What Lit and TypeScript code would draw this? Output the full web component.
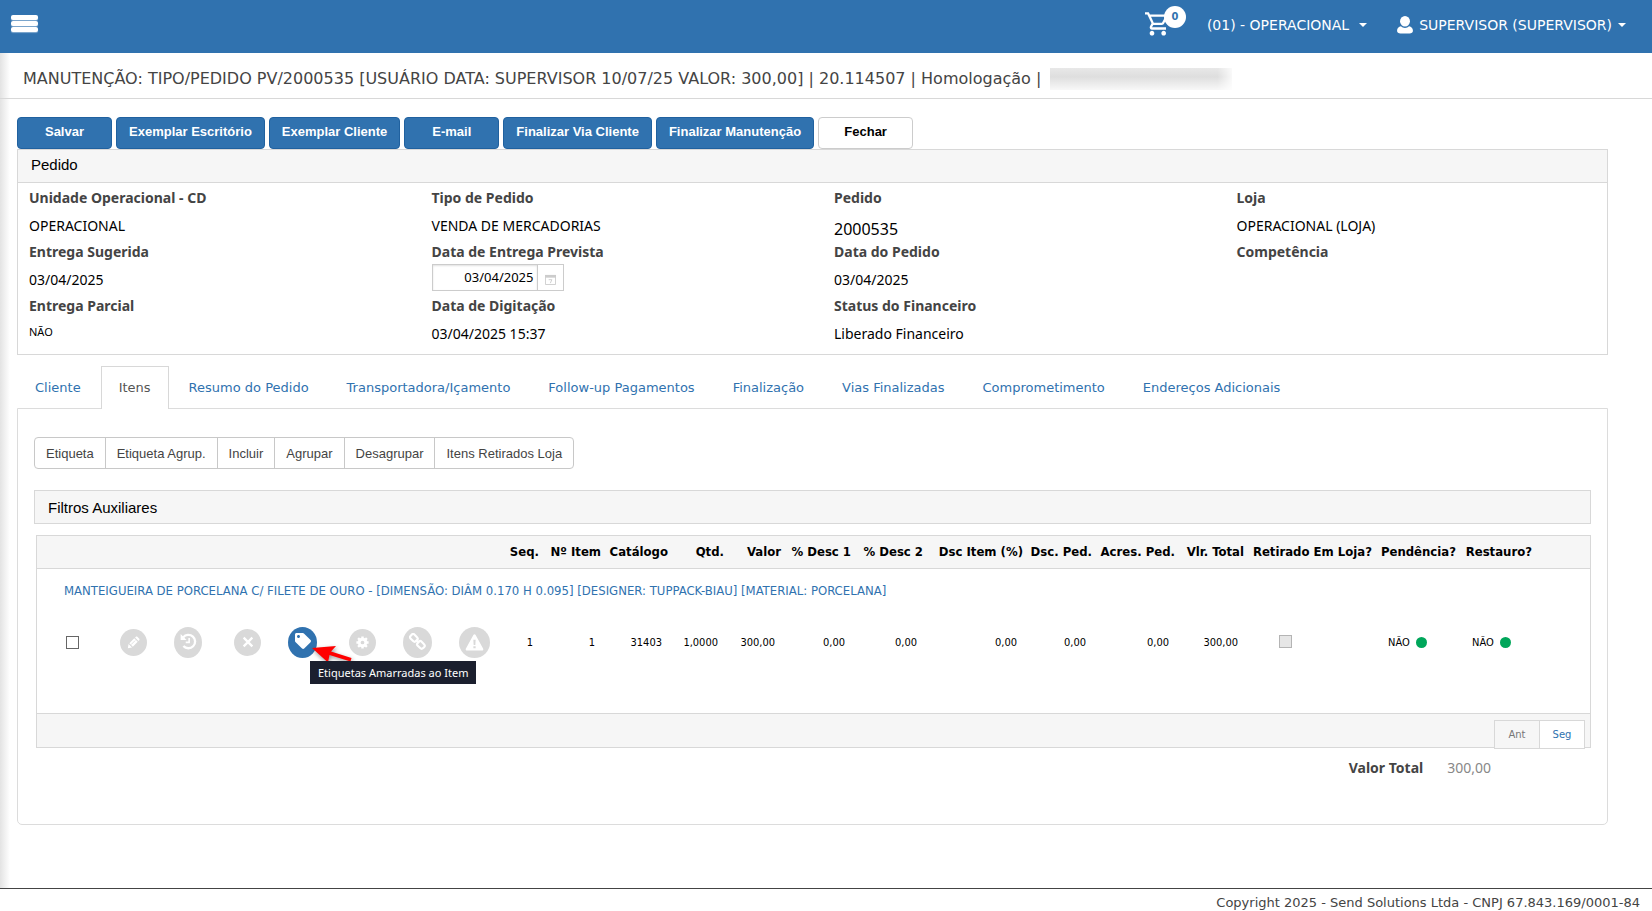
import { LitElement, html, css, svg, nothing } from "lit";
import type { TemplateResult } from "lit";
import { customElement, property, state } from "lit/decorators.js";
import { classMap } from "lit/directives/class-map.js";

interface Field {
  label: string;
  value?: string;
  kind?: "date" | "big" | "small";
}

interface Column {
  label: string;
  width: number;
  value: string;
  kind?: "check" | "status";
}

interface Action {
  label: string;
  icon: string;
  size: "small" | "medium" | "large" | "wide";
  spaced?: boolean;
  active?: boolean;
}

const FIELDS: Field[] = [
  { label: "Unidade Operacional - CD", value: "OPERACIONAL" },
  { label: "Tipo de Pedido", value: "VENDA DE MERCADORIAS" },
  { label: "Pedido", value: "2000535", kind: "big" },
  { label: "Loja", value: "OPERACIONAL (LOJA)" },
  { label: "Entrega Sugerida", value: "03/04/2025" },
  { label: "Data de Entrega Prevista", value: "03/04/2025", kind: "date" },
  { label: "Data do Pedido", value: "03/04/2025" },
  { label: "Competência" },
  { label: "Entrega Parcial", value: "NÃO", kind: "small" },
  { label: "Data de Digitação", value: "03/04/2025 15:37" },
  { label: "Status do Financeiro", value: "Liberado Financeiro" },
];

const TABS = [
  "Cliente",
  "Itens",
  "Resumo do Pedido",
  "Transportadora/Içamento",
  "Follow-up Pagamentos",
  "Finalização",
  "Vias Finalizadas",
  "Comprometimento",
  "Endereços Adicionais",
];

const COLUMNS: Column[] = [
  { label: "Seq.", width: 38, value: "1" },
  { label: "Nº Item", width: 62, value: "1" },
  { label: "Catálogo", width: 67, value: "31403" },
  { label: "Qtd.", width: 56, value: "1,0000" },
  { label: "Valor", width: 57, value: "300,00" },
  { label: "% Desc 1", width: 70, value: "0,00" },
  { label: "% Desc 2", width: 72, value: "0,00" },
  { label: "Dsc Item (%)", width: 100, value: "0,00" },
  { label: "Dsc. Ped.", width: 69, value: "0,00" },
  { label: "Acres. Ped.", width: 83, value: "0,00" },
  { label: "Vlr. Total", width: 69, value: "300,00" },
  { label: "Retirado Em Loja?", width: 128, value: "", kind: "check" },
  { label: "Pendência?", width: 84, value: "NÃO", kind: "status" },
  { label: "Restauro?", width: 76, value: "NÃO", kind: "status" },
];

const ACTIONS: Action[] = [
  { label: "Editar", icon: "pencil", size: "small" },
  { label: "Histórico", icon: "history", size: "medium", spaced: true },
  { label: "Excluir", icon: "close", size: "small" },
  { label: "Etiquetas Amarradas ao Item", icon: "tag", size: "large", spaced: true, active: true },
  { label: "Configurar", icon: "gear", size: "small" },
  { label: "Vincular", icon: "link", size: "large" },
  { label: "Alerta", icon: "warning", size: "wide" },
];

const GLYPHS: Record<string, TemplateResult> = {
  pencil: svg`<svg viewBox="0 0 16 16" width="13" height="13">
    <path fill="#fff" d="M1 15l.9-5.200 4.300 4.300zM2.900 8.800l6-6 4.300 4.300-6 6zM9.900 1.900l1-1c.5-.5 1.300-.5 1.800 0l2.400 2.400c.5.5.5 1.300 0 1.800l-1 1z"/>
    <path stroke="#d9d9d9" stroke-width="1" d="M5 10.600l5-5" fill="none"/></svg>`,
  history: svg`<svg viewBox="0 0 16 16" width="17" height="17">
    <path fill="none" stroke="#fff" stroke-width="2.2" d="M3 4.1A6.3 6.3 0 1 1 3.2 12.2"/>
    <path fill="#fff" d="M.6 1v5.6h5.6z"/>
    <path fill="none" stroke="#fff" stroke-width="1.5" d="M8.6 4.6v4.2H5.4"/></svg>`,
  close: svg`<svg viewBox="0 0 16 16" width="12" height="12">
    <path fill="none" stroke="#fff" stroke-width="3" d="M2.2 2.2l11.6 11.6M13.8 2.2L2.2 13.8"/></svg>`,
  tag: svg`<svg viewBox="0 0 512 512" width="16" height="16">
    <path fill="#fff" d="M0 252.118V48C0 21.49 21.49 0 48 0h204.118a48 48 0 0 1 33.941 14.059l211.882 211.882c18.745 18.745 18.745 49.137 0 67.882L293.823 497.941c-18.745 18.745-49.137 18.745-67.882 0L14.059 286.059A48 48 0 0 1 0 252.118zM112 64c-26.51 0-48 21.49-48 48s21.49 48 48 48 48-21.49 48-48-21.49-48-48-48z"/></svg>`,
  gear: svg`<svg viewBox="-8 -8 16 16" width="13" height="13">
    <circle r="4.1" fill="none" stroke="#fff" stroke-width="3.6"/>
    <path stroke="#fff" stroke-width="3" d="M0-4.5v-3M0 4.5v3M-4.5 0h-3M4.5 0h3M3.4 3.4l2 2M-3.4 3.4l-2 2M3.4-3.4l2-2M-3.4-3.4l-2-2"/></svg>`,
  link: svg`<svg viewBox="0 0 16 16" width="17" height="17">
    <g fill="none" stroke="#fff" stroke-width="2">
      <rect x="-3.6" y="-2.6" width="7.2" height="5.2" rx="2" transform="translate(4.6 4.6) rotate(45)"/>
      <rect x="-3.6" y="-2.6" width="7.2" height="5.2" rx="2" transform="translate(11.2 11.2) rotate(45)"/>
      <path d="M6.3 6.3l3.2 3.2"/></g></svg>`,
  warning: svg`<svg viewBox="0 0 20 18" width="19" height="17">
    <path fill="#fff" d="M8.8 1c.5-.9 1.9-.9 2.4 0l8 14.6c.5.9-.2 2-1.2 2H2c-1 0-1.7-1.1-1.2-2z"/>
    <path fill="#d9d9d9" d="M8.8 6h2.4l-.3 5.6H9.1zM8.8 12.9h2.4v2.2H8.8z"/></svg>`,
};

const caret = html`<svg class="caret" viewBox="0 0 8 4" width="8" height="4" aria-hidden="true">
  <path fill="#fff" d="M0 0h8L4 4z" /></svg>`;

@customElement("app-topbar")
export class AppTopbar extends LitElement {
  static styles = css`
    :host {
      display: block;
      background: #3072af;
      color: #fff;
    }
    .bar {
      display: flex;
      align-items: center;
      height: 49px;
      padding: 0 26px 4px 11px;
    }
    button {
      display: flex;
      align-items: center;
      border: 0;
      padding: 0;
      background: none;
      color: inherit;
      font: 14px/20px "DejaVu Sans", Verdana, sans-serif;
      white-space: nowrap;
      cursor: pointer;
    }
    .menu {
      flex-direction: column;
      gap: 1px;
      width: 27px;
      margin: 0 auto 3px 0;
    }
    .menu span {
      width: 100%;
      height: 5px;
      border-radius: 2px;
      background: #fff;
      box-shadow: 0 1px 1px rgba(255, 255, 255, 0.4);
    }
    .cart {
      position: relative;
      width: 41px;
      height: 28px;
      margin-right: 21px;
    }
    .badge {
      position: absolute;
      top: -5px;
      right: 0;
      width: 22px;
      border-radius: 50%;
      background: #fff;
      color: #3072af;
      font: bold 11px/22px "DejaVu Sans Condensed", Tahoma, sans-serif;
      text-align: center;
    }
    .unit {
      gap: 10px;
      margin-right: 30px;
    }
    .user {
      gap: 6px;
    }
  `;

  render() {
    return html`<header class="bar">
      <button class="menu" aria-label="Menu"><span></span><span></span><span></span></button>
      <button class="cart" aria-label="Carrinho">
        <svg viewBox="1 1 24 24" width="28" height="28" aria-hidden="true">
          <path
            fill="#fff"
            d="M15.55 13c.75 0 1.41-.41 1.75-1.03l3.58-6.49A.996.996 0 0 0 20.01 4H5.21l-.94-2H1v2h2l3.6 7.59-1.35 2.44C4.52 15.37 5.48 17 7 17h12v-2H7l1.1-2h7.45zM6.16 6h12.15l-2.76 5H8.53L6.16 6zM7 18c-1.1 0-1.99.9-1.99 2S5.9 22 7 22s2-.9 2-2-.9-2-2-2zm10 0c-1.1 0-1.99.9-1.99 2s.89 2 1.99 2 2-.9 2-2-.9-2-2-2z"
          />
        </svg>
        <span class="badge">0</span>
      </button>
      <button class="unit">(01) - OPERACIONAL ${caret}</button>
      <button class="user">
        <svg viewBox="0 0 15 17" width="16" height="18" aria-hidden="true">
          <ellipse cx="7.5" cy="5" rx="4.7" ry="5" fill="#fff" />
          <path fill="#fff" d="M0 14c0-2.6 1.600-3.800 3.600-4.300a5.500 5.500 0 0 0 7.800 0C13.400 10.200 15 11.400 15 14c0 1.600-1.400 2.500-3.200 2.500H3.200C1.400 16.500 0 15.600 0 14z" />
        </svg>
        SUPERVISOR (SUPERVISOR) ${caret}
      </button>
    </header>`;
  }
}

@customElement("order-panel")
export class OrderPanel extends LitElement {
  static styles = css`
    :host {
      display: block;
      border: 1px solid #d8d8d8;
    }
    h2 {
      margin: 0;
      padding: 0 13px 2px;
      border-bottom: 1px solid #d8d8d8;
      background: #f6f6f6;
      color: #000;
      font: 15px/30px "Liberation Sans", Arial, sans-serif;
    }
    .grid {
      display: grid;
      grid-template-columns: repeat(4, 1fr);
      grid-auto-rows: 54px;
      column-gap: 32px;
      padding: 3px 0 6px 11px;
    }
    .label {
      display: block;
      color: #444;
      font: bold 14px/24px "Noto Sans", "Trebuchet MS", sans-serif;
    }
    .value {
      display: block;
      padding-top: 2px;
      color: #000;
      font: 14px/28px "Noto Sans", "Trebuchet MS", sans-serif;
    }
    .big {
      padding-top: 5px;
      font-size: 16px;
    }
    .small {
      padding-top: 0;
      font-size: 11px;
    }
    .date {
      display: flex;
    }
    .date input {
      box-sizing: border-box;
      width: 106px;
      height: 27px;
      margin: 0;
      padding: 0 3px 2px;
      border: 1px solid #ccc;
      font: 13px "Noto Sans", "Trebuchet MS", sans-serif;
      text-align: right;
      color: #000;
      box-shadow: inset 0 1px 2px rgba(0, 0, 0, 0.12);
    }
    .date button {
      box-sizing: border-box;
      display: flex;
      align-items: center;
      justify-content: center;
      width: 27px;
      height: 27px;
      margin-left: -1px;
      padding: 4px 0 0;
      border: 1px solid #ccc;
      background: #fff;
    }
  `;

  private renderField(f: Field) {
    if (f.kind === "date") {
      return html`<div>
        <label class="label" for="due">${f.label}</label>
        <div class="date">
          <input id="due" type="text" .value=${f.value ?? ""} />
          <button aria-label="Abrir calendário">
            <svg viewBox="0 0 12 12" width="11" height="11" aria-hidden="true">
              <path fill="#ccc" d="M0 1h12v3H0z" />
              <path fill="none" stroke="#ccc" d="M.5 1.500v10h11v-10" />
              <path fill="none" stroke="#ccc" d="M4 6.200h3.500L5.800 10" />
            </svg>
          </button>
        </div>
      </div>`;
    }
    return html`<div>
      <span class="label">${f.label}</span>
      ${f.value
        ? html`<span class=${classMap({ value: true, big: f.kind === "big", small: f.kind === "small" })}>${f.value}</span>`
        : nothing}
    </div>`;
  }

  render() {
    return html`<h2>Pedido</h2>
      <div class="grid">${FIELDS.map((f) => this.renderField(f))}</div>`;
  }
}

@customElement("action-icon")
export class ActionIcon extends LitElement {
  static styles = css`
    :host {
      display: block;
      position: relative;
    }
    button {
      display: flex;
      align-items: center;
      justify-content: center;
      padding: 0;
      border: 0;
      border-radius: 50%;
      background: #d9d9d9;
    }
    .small {
      width: 27px;
      height: 27px;
    }
    .medium {
      width: 28px;
      height: 31px;
    }
    .large {
      width: 29px;
      height: 31px;
    }
    .wide {
      width: 31px;
      height: 31px;
    }
    .medium,
    .large {
      box-sizing: border-box;
      padding-bottom: 2px;
    }
    .active {
      background: #3072af;
    }
    .pointer {
      position: absolute;
      left: 22px;
      top: 16px;
      filter: drop-shadow(1px 2px 2px rgba(0, 0, 0, 0.4));
    }
    .tip {
      position: absolute;
      left: 22px;
      top: 34px;
      padding: 0 8px;
      background: #1b1f2e;
      color: #fff;
      font: 11px/23px "Noto Sans", "Trebuchet MS", sans-serif;
      white-space: nowrap;
    }
  `;

  @property({ attribute: false }) action!: Action;

  render() {
    const { label, icon, size, active } = this.action;
    return html`<button class=${classMap({ [size]: true, active: !!active })} aria-label=${label}>${GLYPHS[icon]}</button>
      ${active
        ? html`<svg class="pointer" viewBox="0 0 44 22" width="44" height="22" aria-hidden="true">
              <path fill="#f00" d="M2 5L26 3l-5 5.500 20.500 6.500-1 3.500L19.500 12 18 19.500z" />
            </svg>
            <span class="tip" role="tooltip">${label}</span>`
        : nothing}`;
  }
}

@customElement("items-table")
export class ItemsTable extends LitElement {
  static styles = css`
    :host {
      display: block;
      border: 1px solid #d8d8d8;
    }
    table {
      width: 100%;
      border-collapse: collapse;
      table-layout: fixed;
      font: 11px/20px "DejaVu Sans Condensed", Tahoma, sans-serif;
      color: #000;
    }
    th {
      height: 32px;
      padding: 0 5px 0 0;
      border-bottom: 1px solid #d8d8d8;
      background: #f6f6f6;
      font-size: 13px;
      text-align: right;
      white-space: nowrap;
    }
    td {
      padding: 0 11px 0 0;
      text-align: right;
    }
    .description {
      height: 43px;
      padding-left: 27px;
      text-align: left;
      font-size: 13px;
    }
    .description a {
      color: #3072af;
      text-decoration: none;
    }
    .data td {
      height: 57px;
      padding-top: 1px;
      padding-bottom: 41px;
    }
    .data .actions {
      height: 58px;
      padding-top: 0;
    }
    .data .left {
      padding-left: 11px;
      padding-right: 0;
      text-align: left;
    }
    .data .middle {
      height: 59px;
      padding-top: 0;
      padding-bottom: 42px;
      padding-left: 30px;
      text-align: left;
    }
    .tools {
      display: flex;
      align-items: center;
      gap: 27px;
      padding-left: 29px;
    }
    .tools input {
      margin-right: 14px;
    }
    .spaced {
      margin-right: 5px;
    }
    input {
      display: block;
      appearance: none;
      box-sizing: border-box;
      width: 13px;
      height: 13px;
      margin: 0;
      border: 1px solid #666;
      background: #fff;
    }
    input:disabled {
      border-color: #b4b4b4;
      background: #e6e6e6;
    }
    .status {
      display: flex;
      align-items: center;
      gap: 6px;
    }
    .dot {
      width: 11px;
      height: 11px;
      border-radius: 50%;
      background: #00a65a;
    }
    .pager {
      display: flex;
      justify-content: flex-end;
      box-sizing: border-box;
      height: 34px;
      padding: 6px 5px 0;
      border-top: 1px solid #d8d8d8;
      background: #f6f6f6;
    }
    .pager button {
      box-sizing: border-box;
      width: 46px;
      height: 29px;
      margin-left: -1px;
      padding: 0;
      border: 1px solid #d8d8d8;
      background: #fff;
      color: #3072af;
      font: 10px "DejaVu Sans", Verdana, sans-serif;
    }
    .pager button:disabled {
      background: #f6f6f6;
      color: #777;
    }
  `;

  private renderCell(c: Column) {
    if (c.kind === "check") {
      return html`<td class="middle"><input type="checkbox" disabled aria-label=${c.label} /></td>`;
    }
    if (c.kind === "status") {
      return html`<td class="left"><span class="status">${c.value}<span class="dot"></span></span></td>`;
    }
    return html`<td>${c.value}</td>`;
  }

  render() {
    return html`<table>
        <colgroup>
          <col style="width:469px" />
          ${COLUMNS.map((c) => html`<col style="width:${c.width}px" />`)}
          <col />
        </colgroup>
        <thead>
          <tr>
            <th></th>
            ${COLUMNS.map((c) => html`<th scope="col">${c.label}</th>`)}
            <th></th>
          </tr>
        </thead>
        <tbody>
          <tr>
            <td class="description" colspan="16">
              <a href="#item">MANTEIGUEIRA DE PORCELANA C/ FILETE DE OURO - [DIMENSÃO: DIÂM 0.170 H 0.095] [DESIGNER: TUPPACK-BIAU] [MATERIAL: PORCELANA]</a>
            </td>
          </tr>
          <tr class="data">
            <td class="actions">
              <div class="tools">
                <input type="checkbox" aria-label="Selecionar item" />
                ${ACTIONS.map((a) => html`<action-icon class=${classMap({ spaced: !!a.spaced })} .action=${a}></action-icon>`)}
              </div>
            </td>
            ${COLUMNS.map((c) => this.renderCell(c))}
            <td></td>
          </tr>
        </tbody>
      </table>
      <div class="pager"><button disabled>Ant</button><button>Seg</button></div>`;
  }
}

@customElement("app-root")
export class AppRoot extends LitElement {
  static styles = css`
    :host {
      display: flex;
      flex-direction: column;
      min-height: 100vh;
      background: #fff;
    }
    main {
      flex: 1;
      background: linear-gradient(to right, #e3e3e3, #fff 10px);
    }
    .title {
      display: flex;
      align-items: center;
      gap: 9px;
      margin: 0;
      padding: 7px 23px 0;
      border-bottom: 1px solid #d8d8d8;
      color: #444;
      font: 16px/38px "DejaVu Sans", Verdana, sans-serif;
      white-space: nowrap;
    }
    .redacted {
      width: 182px;
      height: 22px;
      background: linear-gradient(to bottom, #e8e8e8, #dedede 40%, #f8f8f8);
      mask-image: linear-gradient(to right, #000 92%, rgba(0, 0, 0, 0.2));
    }
    .content {
      padding: 18px 44px 0 17px;
    }
    .toolbar {
      display: flex;
      gap: 4px;
    }
    .toolbar button {
      box-sizing: border-box;
      min-width: 95px;
      height: 32px;
      padding: 0 12px 2px;
      border: 1px solid #20619f;
      border-radius: 4px;
      background: #3072af;
      color: #fff;
      font: bold 13px/28px "Liberation Sans", Arial, sans-serif;
      white-space: nowrap;
    }
    .toolbar .plain {
      border-color: #ccc;
      background: #fff;
      color: #000;
    }
    .tabs {
      display: flex;
      gap: 2px;
      margin-top: 11px;
    }
    .tab {
      height: 42px;
      padding: 0 17px;
      border: 1px solid transparent;
      border-bottom: 0;
      background: none;
      color: #3072af;
      font: 13px/42px "DejaVu Sans", Verdana, sans-serif;
      white-space: nowrap;
      box-sizing: border-box;
    }
    .tab.selected {
      height: 43px;
      margin-bottom: -1px;
      border-color: #d8d8d8;
      background: #fff;
      color: #555;
      position: relative;
    }
    .sheet {
      padding: 28px 16px 42px;
      border: 1px solid #dcdcdc;
      border-radius: 0 0 5px 5px;
    }
    .group {
      display: flex;
      width: max-content;
      border: 1px solid #c8c8c8;
      border-radius: 4px;
    }
    .group button {
      height: 30px;
      padding: 0 11px;
      border: 0;
      background: none;
      color: #444;
      font: 13px "Liberation Sans", Arial, sans-serif;
      white-space: nowrap;
    }
    .group button + button {
      border-left: 1px solid #c8c8c8;
    }
    .filters {
      display: block;
      box-sizing: border-box;
      width: 100%;
      height: 34px;
      margin-top: 21px;
      padding: 0 13px;
      border: 1px solid #d8d8d8;
      background: #f6f6f6;
      color: #000;
      font: 15px "Liberation Sans", Arial, sans-serif;
      text-align: left;
    }
    items-table {
      margin: 11px 0 0 2px;
    }
    .total {
      display: flex;
      justify-content: flex-end;
      gap: 24px;
      padding: 6px 100px 0 0;
      font: 14px/28px "Noto Sans", "Trebuchet MS", sans-serif;
      color: #888;
    }
    .total strong {
      color: #444;
    }
    footer {
      padding: 5px 12px 0;
      border-top: 1px solid #444;
      color: #444;
      font: 13px/17px "DejaVu Sans", Verdana, sans-serif;
      text-align: right;
    }
  `;

  @state() private tab = "Itens";

  render() {
    return html`<app-topbar></app-topbar>
      <main>
        <h1 class="title">
          MANUTENÇÃO: TIPO/PEDIDO PV/2000535 [USUÁRIO DATA: SUPERVISOR 10/07/25 VALOR: 300,00] | 20.114507 | Homologação |
          <span class="redacted"></span>
        </h1>
        <div class="content">
          <div class="toolbar">
            ${["Salvar", "Exemplar Escritório", "Exemplar Cliente", "E-mail", "Finalizar Via Cliente", "Finalizar Manutenção"].map(
              (t) => html`<button>${t}</button>`,
            )}
            <button class="plain">Fechar</button>
          </div>
          <order-panel></order-panel>
          <nav class="tabs" role="tablist">
            ${TABS.map(
              (t) => html`<button
                role="tab"
                aria-selected=${t === this.tab}
                class=${classMap({ tab: true, selected: t === this.tab })}
                @click=${() => (this.tab = t)}
              >${t}</button>`,
            )}
          </nav>
          <section class="sheet">
            <div class="group">
              ${["Etiqueta", "Etiqueta Agrup.", "Incluir", "Agrupar", "Desagrupar", "Itens Retirados Loja"].map(
                (t) => html`<button>${t}</button>`,
              )}
            </div>
            <button class="filters">Filtros Auxiliares</button>
            <items-table></items-table>
            <div class="total"><strong>Valor Total</strong><span>300,00</span></div>
          </section>
        </div>
      </main>
      <footer>Copyright 2025 - Send Solutions Ltda - CNPJ 67.843.169/0001-84</footer>`;
  }
}
